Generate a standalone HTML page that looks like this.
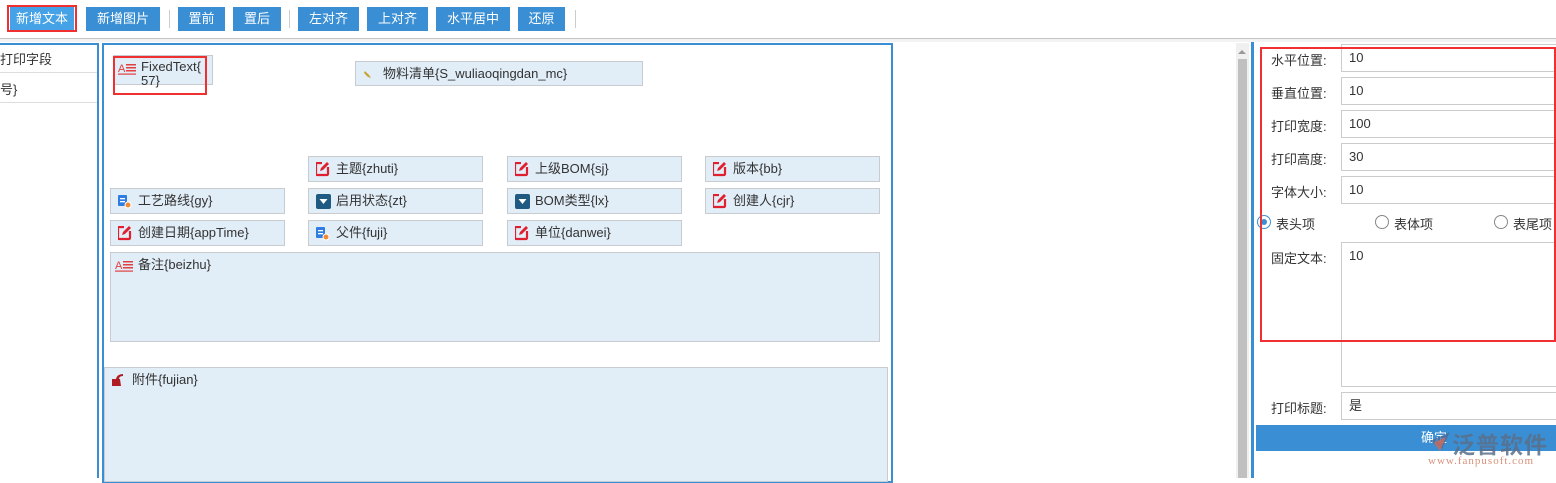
<!DOCTYPE html>
<html><head><meta charset="utf-8"><style>
*{margin:0;padding:0;box-sizing:border-box}
body{width:1556px;height:478px;overflow:hidden;background:#fff;position:relative;font-family:"Liberation Sans","Noto Sans CJK SC",sans-serif;font-size:13px;color:#333}
.a{position:absolute}
.btn{position:absolute;top:7px;height:24px;background:#3a8fd4;color:#fff;font-size:13px;line-height:24px;text-align:center}
.sep{position:absolute;top:10px;width:1px;height:18px;background:#ccc}
.f{position:absolute;background:#e1edf7;border:1px solid #c8ccd0;height:26px;line-height:24px;padding-left:27px;font-size:13px;color:#333}
.f svg{position:absolute;left:7px;top:5px}
.lab{position:absolute;left:1271px;font-size:13px;color:#333}
.inp{position:absolute;left:1341px;width:230px;height:28px;border:1px solid #ccc;padding-left:7px;line-height:26px;font-size:13px}
.rd{position:absolute;top:215px;width:14px;height:14px;border:1px solid #888;border-radius:50%}
</style></head><body>
<div class="btn" style="left:10px;width:64px;background:#45a2e6">新增文本</div>
<div class="a" style="left:7px;top:5px;width:70px;height:27px;border:2px solid #f03030"></div>
<div class="btn" style="left:86px;width:74px">新增图片</div>
<div class="sep" style="left:169px"></div>
<div class="btn" style="left:178px;width:47px">置前</div>
<div class="btn" style="left:233px;width:48px">置后</div>
<div class="sep" style="left:289px"></div>
<div class="btn" style="left:298px;width:61px">左对齐</div>
<div class="btn" style="left:367px;width:61px">上对齐</div>
<div class="btn" style="left:436px;width:74px">水平居中</div>
<div class="btn" style="left:518px;width:47px">还原</div>
<div class="sep" style="left:575px"></div>
<div class="a" style="left:0;top:38px;width:1556px;height:1px;background:#c4c4c4"></div>
<div class="a" style="left:0;top:39px;width:1556px;height:3px;background:#f3f3f3"></div>

<div class="a" style="left:0;top:43px;width:99px;height:435px;border-right:2px solid #3a8fd4;border-top:2px solid #3a8fd4"></div>
<div class="a" style="left:0;top:49px;font-size:13px">打印字段</div>
<div class="a" style="left:0;top:72px;width:97px;height:1px;background:#ddd"></div>
<div class="a" style="left:0;top:79px;font-size:13px">号}</div>
<div class="a" style="left:0;top:102px;width:97px;height:1px;background:#ddd"></div>

<div class="a" style="left:102px;top:43px;width:791px;height:440px;border:2px solid #3a8fd4"></div>

<div class="f" style="left:113px;top:55px;width:100px;height:30px;line-height:14px;padding-top:4px">FixedText{<br>57}<svg width="18" height="13" style="left:4px;top:6px"><text x="0" y="10" font-size="11" fill="#e04040" font-family="Liberation Sans">A</text><rect x="8" y="2" width="10" height="1.5" fill="#e04040"/><rect x="8" y="5" width="10" height="1.5" fill="#e04040"/><rect x="8" y="8" width="10" height="1.5" fill="#e04040"/><rect x="0" y="11.5" width="18" height="1.2" fill="#e04040"/></svg></div>
<div class="a" style="left:113px;top:56px;width:94px;height:39px;border:2px solid #f03030"></div>
<div class="f" style="left:355px;top:61px;width:288px;height:25px">物料清单{S_wuliaoqingdan_mc}<svg width="10" height="10" style="top:7px"><path d="M2 2 L6 6 L8 9 L5 8 L1 4Z" fill="#c9a030"/></svg></div>

<svg width="0" height="0" style="position:absolute"><defs>
<g id="ed"><rect x="0" y="1" width="12" height="12" rx="1" fill="none" stroke="#e0202e" stroke-width="2.2"/><rect x="6" y="-1" width="8" height="6" fill="#e1edf7"/><path d="M4 9 L5 6 L11 0 L13 2 L7 8Z" fill="#e0202e"/></g>
<g id="dd"><rect x="0" y="0" width="15" height="15" rx="2" fill="#1e5a82"/><path d="M3.5 5 L11.5 5 L7.5 10Z" fill="#fff"/></g>
<g id="dc"><rect x="0" y="1" width="9" height="11" rx="1" fill="#2f7de0"/><rect x="2" y="4" width="5" height="1.3" fill="#fff"/><rect x="2" y="7" width="5" height="1.3" fill="#fff"/><circle cx="10" cy="11" r="3" fill="#f28a30" stroke="#fff" stroke-width="1"/></g>
</defs></svg>

<div class="f" style="left:308px;top:156px;width:175px">主题{zhuti}<svg width="15" height="15"><use href="#ed"/></svg></div>
<div class="f" style="left:507px;top:156px;width:175px">上级BOM{sj}<svg width="15" height="15"><use href="#ed"/></svg></div>
<div class="f" style="left:705px;top:156px;width:175px">版本{bb}<svg width="15" height="15"><use href="#ed"/></svg></div>

<div class="f" style="left:110px;top:188px;width:175px">工艺路线{gy}<svg width="15" height="15"><use href="#dc"/></svg></div>
<div class="f" style="left:308px;top:188px;width:175px">启用状态{zt}<svg width="15" height="15"><use href="#dd"/></svg></div>
<div class="f" style="left:507px;top:188px;width:175px">BOM类型{lx}<svg width="15" height="15"><use href="#dd"/></svg></div>
<div class="f" style="left:705px;top:188px;width:175px">创建人{cjr}<svg width="15" height="15"><use href="#ed"/></svg></div>

<div class="f" style="left:110px;top:220px;width:175px">创建日期{appTime}<svg width="15" height="15"><use href="#ed"/></svg></div>
<div class="f" style="left:308px;top:220px;width:175px">父件{fuji}<svg width="15" height="15"><use href="#dc"/></svg></div>
<div class="f" style="left:507px;top:220px;width:175px">单位{danwei}<svg width="15" height="15"><use href="#ed"/></svg></div>

<div class="f" style="left:110px;top:252px;width:770px;height:90px">备注{beizhu}<svg width="18" height="13" style="left:4px;top:6px"><text x="0" y="10" font-size="11" fill="#e04040" font-family="Liberation Sans">A</text><rect x="8" y="2" width="10" height="1.5" fill="#e04040"/><rect x="8" y="5" width="10" height="1.5" fill="#e04040"/><rect x="8" y="8" width="10" height="1.5" fill="#e04040"/><rect x="0" y="11.5" width="18" height="1.2" fill="#e04040"/></svg></div>
<div class="f" style="left:104px;top:367px;width:784px;height:115px;padding-left:27px">附件{fujian}<svg width="14" height="14" style="left:6px;top:5px"><path d="M1 6 L9 6 L10 13 L1 13Z" fill="#b01c24"/><path d="M5 6 Q6 1 12 1 L12 3 Q8 3 8 6Z" fill="#b01c24"/></svg></div>

<div class="a" style="left:1236px;top:43px;width:13px;height:435px;background:#f0f0f0"></div>
<div class="a" style="left:1238px;top:59px;width:9px;height:419px;background:#c0c0c0"></div>
<div class="a" style="left:1238px;top:50px;width:0;height:0;border-left:4px solid transparent;border-right:4px solid transparent;border-bottom:4px solid #999"></div>
<div class="a" style="left:1251px;top:42px;width:3px;height:436px;background:#3a8fd4"></div>

<div class="lab" style="top:50px">水平位置:</div><div class="inp" style="top:44px">10</div>
<div class="lab" style="top:83px">垂直位置:</div><div class="inp" style="top:77px">10</div>
<div class="lab" style="top:116px">打印宽度:</div><div class="inp" style="top:110px">100</div>
<div class="lab" style="top:149px">打印高度:</div><div class="inp" style="top:143px">30</div>
<div class="lab" style="top:182px">字体大小:</div><div class="inp" style="top:176px">10</div>
<div class="rd" style="left:1257px;border-color:#3a8fd4"><div style="width:6px;height:6px;background:#3a8fd4;border-radius:50%;margin:3px"></div></div>
<div class="a" style="left:1276px;top:214px">表头项</div>
<div class="rd" style="left:1375px"></div><div class="a" style="left:1394px;top:214px">表体项</div>
<div class="rd" style="left:1494px"></div><div class="a" style="left:1513px;top:214px">表尾项</div>
<div class="lab" style="top:248px">固定文本:</div><div class="inp" style="top:242px;height:145px;line-height:26px">10</div>
<div class="lab" style="top:398px">打印标题:</div><div class="inp" style="top:392px">是</div>
<div class="a" style="left:1256px;top:425px;width:300px;height:26px;background:#3a8fd4;color:#fff;text-align:center;line-height:26px;padding-left:56px">确定</div>
<div class="a" style="left:1260px;top:47px;width:296px;height:295px;border:2px solid #f03030"></div>
<svg class="a" style="left:1428px;top:429px" width="26" height="26"><path d="M2 12 L22 3 L14 20Z" fill="#4a6a9a" opacity=".8"/><path d="M6 14 L18 8 L12 22Z" fill="#e06a50" opacity=".7"/></svg>
<div class="a" style="left:1452px;top:426px;font-size:23px;font-weight:bold;color:#5a6f8a;opacity:.85;letter-spacing:1px">泛普软件</div>
<div class="a" style="left:1428px;top:455px;font-size:11px;color:#d8907a;font-family:'Liberation Serif',serif;letter-spacing:1px">www.fanpusoft.com</div>
</body></html>
